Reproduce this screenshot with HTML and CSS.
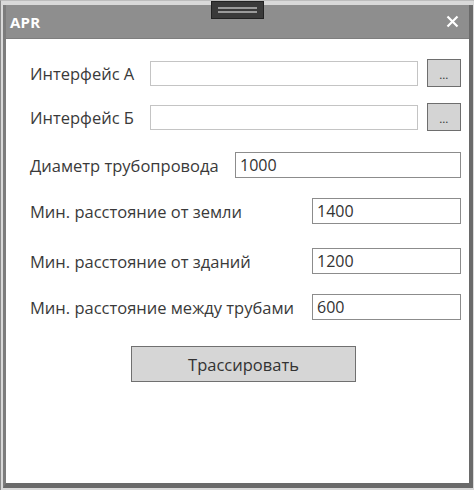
FILE: index.html
```html
<!DOCTYPE html>
<html lang="ru">
<head>
<meta charset="utf-8">
<title>APR</title>
<link rel="stylesheet" href="styles.css">
</head>
<body>
<div class="screen">
  <div class="window">
    <div class="titlebar">
      <span class="title">APR</span>
      <svg class="close" width="13" height="13" viewBox="0 0 13 13"><path d="M1.5 1.5 L11.5 11.5 M11.5 1.5 L1.5 11.5" stroke="#fff" stroke-width="2.2" fill="none"/></svg>
    </div>
    <div class="content">
      <div class="row r1">
        <span class="label lw-a">Интерфейс А</span>
        <div class="input light grow"></div>
        <button class="browse">...</button>
      </div>
      <div class="row r2">
        <span class="label lw-a">Интерфейс Б</span>
        <div class="input light grow"></div>
        <button class="browse">...</button>
      </div>
      <div class="row r3">
        <span class="label lw-d">Диаметр трубопровода</span>
        <div class="input grow">1000</div>
      </div>
      <div class="row r4">
        <span class="label lw-m">Мин. расстояние от земли</span>
        <div class="input grow">1400</div>
      </div>
      <div class="row r5">
        <span class="label lw-m">Мин. расстояние от зданий</span>
        <div class="input grow">1200</div>
      </div>
      <div class="row r6">
        <span class="label lw-m">Мин. расстояние между трубами</span>
        <div class="input grow">600</div>
      </div>
      <div class="actions">
        <button class="trace">Трассировать</button>
      </div>
    </div>
  </div>
  <div class="handle"><span></span><span></span></div>
</div>
</body>
</html>
```

FILE: styles.css
```css
* { box-sizing: border-box; }
html, body { margin: 0; padding: 0; background: #ffffff; }
body {
  font-family: "Open Sans", "Noto Sans", "Liberation Sans", sans-serif;
  color: #333;
}
.screen {
  position: relative;
  width: 474px;
  height: 490px;
  background: #d9d9d9;
  border-left: 1px solid #8a8a8a;
  border-top: 1px solid #bdbdbd;
  padding: 4px 1px 2px 2px;
}
.window {
  width: 100%;
  height: 100%;
  display: flex;
  flex-direction: column;
  border-left: 3px solid #7c7c7c;
  border-right: 4px solid #6a6a6a;
  border-bottom: 5px solid #6a6a6a;
  background: #fff;
}
.titlebar {
  height: 34px;
  background: #8e8e8e;
  display: flex;
  align-items: center;
  justify-content: space-between;
  padding: 0 10px 0 4px;
  border-bottom: 1px solid #7e7e7e;
}
.title {
  color: #fff;
  font-weight: 700;
  font-size: 15px;
  letter-spacing: 0.2px;
}
.close { display: block; }
.content {
  flex: 1;
  display: flex;
  flex-direction: column;
  padding: 20px 8px 0 24px;
  font-size: 16.5px;
}
.row {
  display: flex;
  align-items: center;
  height: 28px;
}
.r2 { margin-top: 16px; }
.r3 { margin-top: 20px; }
.r4 { margin-top: 18px; }
.r5 { margin-top: 22px; }
.r6 { margin-top: 18px; }
.label { flex: none; color: #3a3a3a; white-space: nowrap; }
.lw-a { width: 120px; }
.lw-d { width: 205px; }
.lw-m { width: 282px; }
.grow { flex: 1; }
.input {
  height: 26px;
  border: 1px solid #8c8c8c;
  background: #fff;
  padding: 0 4px;
  line-height: 24px;
  font-size: 16px;
  color: #333;
}
.input.light { border-color: #c4c4c4; height: 25px; }
.browse {
  flex: none;
  width: 34px;
  height: 28px;
  margin-left: 9px;
  background: #d4d4d4;
  border: 1px solid #6e6e6e;
  padding: 5px 0 0;
  font-size: 9px;
  font-weight: 700;
  color: #444;
  font-family: inherit;
  letter-spacing: 0.5px;
}
.actions {
  display: flex;
  padding-left: 101px;
  margin-top: 25px;
}
.trace {
  width: 225px;
  height: 36px;
  background: #d6d6d6;
  border: 1px solid #707070;
  font-family: inherit;
  font-size: 16.5px;
  color: #333;
}
.handle {
  position: absolute;
  left: 210px;
  top: 0;
  width: 53px;
  height: 18px;
  background: #3a3a3a;
  border: 1px solid #222;
  display: flex;
  flex-direction: column;
  justify-content: center;
  gap: 2px;
  padding: 0 6px;
}
.handle span {
  display: block;
  height: 2px;
  background: #9a9a9a;
}
```
